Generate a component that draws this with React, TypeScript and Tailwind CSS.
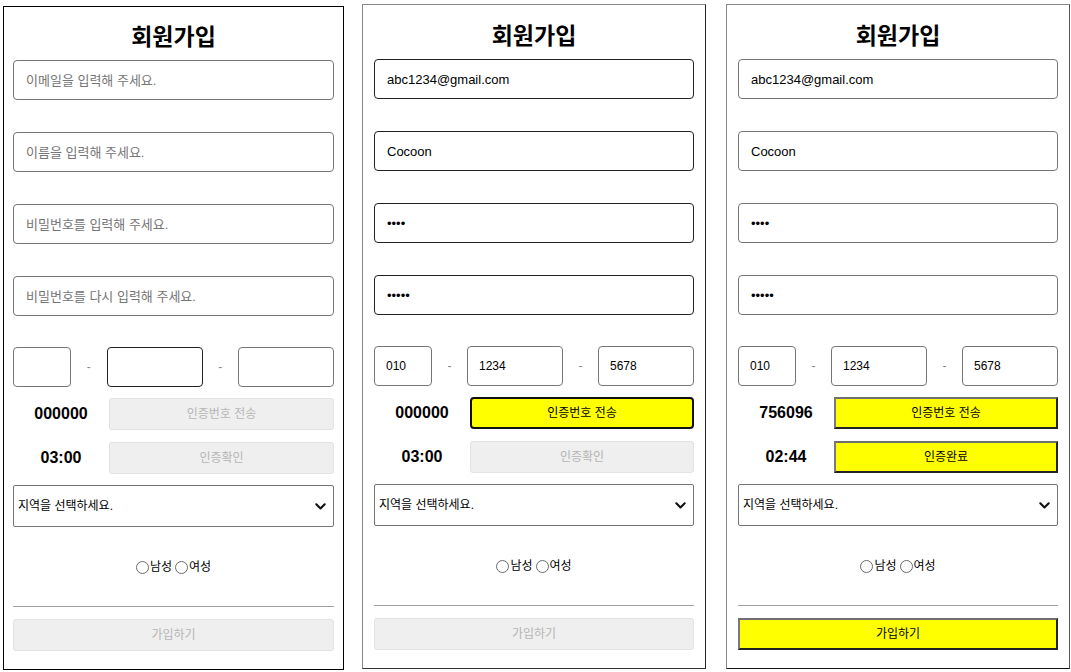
import React from "react";

type Variant = 1 | 2 | 3;

const FONT = { fontFamily: '"Liberation Sans", Arial, "Noto Sans CJK KR", sans-serif' };

function TextInput({
  placeholder,
  value,
  type = "text",
  dark,
}: {
  placeholder: string;
  value?: string;
  type?: string;
  dark?: boolean;
}) {
  return (
    <input
      readOnly
      type={type}
      placeholder={placeholder}
      value={value ?? ""}
      className={
        "block h-[40px] w-full rounded-[4px] border bg-white px-[12px] text-[13px] text-black outline-none placeholder:text-[#757575] " +
        (dark ? "border-[#222]" : "border-[#767676]")
      }
      style={FONT}
    />
  );
}

function PhoneBox({ value, dark, w }: { value: string; dark?: boolean; w: string }) {
  return (
    <input
      readOnly
      value={value}
      className={
        "block h-[40px] rounded-[4px] border bg-white px-[11px] text-[12px] text-black outline-none " +
        w +
        " " +
        (dark ? "border-[#222]" : "border-[#767676]")
      }
      style={FONT}
    />
  );
}

function Dash() {
  return <div className="flex flex-1 items-center justify-center text-[12px] text-[#888]">-</div>;
}

function DisabledBtn({ label }: { label: string }) {
  return (
    <div className="flex h-[32px] flex-1 items-center justify-center rounded-[3px] border border-[#e2e2e2] bg-[#efefef] text-[12px] text-[#b5b5b5]">
      {label}
    </div>
  );
}

function YellowRounded({ label }: { label: string }) {
  return (
    <div className="flex h-[32px] flex-1 items-center justify-center rounded-[4px] border-2 border-[#111] bg-[#ffff00] text-[12px] text-black">
      {label}
    </div>
  );
}

function YellowSquare({ label }: { label: string }) {
  return (
    <div className="flex h-[32px] flex-1 items-center justify-center border-2 border-t-[#6f6f6f] border-l-[#7a7a7a] border-r-[#222] border-b-[#222] bg-[#ffff00] text-[12px] text-black">
      {label}
    </div>
  );
}

function Radio({ label }: { label: string }) {
  return (
    <div className="flex items-center">
      <span className="mr-[1px] inline-block h-[13px] w-[13px] rounded-full border border-[#6b6b6b] bg-white" />
      <span className="text-[12px] text-black">{label}</span>
    </div>
  );
}

function Panel({ v }: { v: Variant }) {
  const filled = v !== 1;
  const panelCls =
    v === 1
      ? "mt-[6px] ml-[3px] w-[341px] border border-black px-[9px]"
      : v === 2
      ? "mt-[4px] ml-[18px] w-[344px] border border-t-[#888] border-l-[#888] border-r-[#222] border-b-[#333] px-[11px]"
      : "mt-[4px] ml-[20px] w-[344px] border border-t-[#888] border-l-[#888] border-r-[#555] border-b-[#111] px-[11px]";

  return (
    <div className={"flex flex-col bg-white pb-[18px] " + panelCls} style={FONT}>
      <div
        className={
          "flex items-center justify-center font-bold text-[23px] text-black " +
          (v === 1 ? "h-[53px] pt-[4px]" : "h-[54px] pt-[5px]")
        }
        style={{ fontFamily: '"Noto Sans CJK KR", sans-serif' }}
      >
        회원가입
      </div>

      <div className="h-[72px]">
        <TextInput placeholder="이메일을 입력해 주세요." value={filled ? "abc1234@gmail.com" : ""} dark={v === 2} />
      </div>
      <div className="h-[72px]">
        <TextInput placeholder="이름을 입력해 주세요." value={filled ? "Cocoon" : ""} dark={v === 2} />
      </div>
      <div className="h-[72px]">
        <TextInput
          placeholder="비밀번호를 입력해 주세요."
          type={filled ? "password" : "text"}
          value={filled ? "1234" : ""}
          dark={v === 2}
        />
      </div>
      <div className="h-[71px]">
        <TextInput
          placeholder="비밀번호를 다시 입력해 주세요."
          type={filled ? "password" : "text"}
          value={filled ? "12345" : ""}
          dark={v === 2}
        />
      </div>

      <div className="flex h-[40px] items-stretch">
        <PhoneBox w="w-[58px]" value={filled ? "010" : ""} />
        <Dash />
        <PhoneBox w="w-[96px]" value={filled ? "1234" : ""} dark={v === 1} />
        <Dash />
        <PhoneBox w="w-[96px]" value={filled ? "5678" : ""} />
      </div>

      <div className="mt-[11px] flex items-center">
        <div className="flex w-[96px] justify-center text-[16px] font-bold text-black">
          {v === 3 ? "756096" : "000000"}
        </div>
        {v === 1 ? (
          <DisabledBtn label="인증번호 전송" />
        ) : v === 2 ? (
          <YellowRounded label="인증번호 전송" />
        ) : (
          <YellowSquare label="인증번호 전송" />
        )}
      </div>

      <div className="mt-[12px] flex items-center">
        <div className="flex w-[96px] justify-center text-[16px] font-bold text-black">
          {v === 3 ? "02:44" : "03:00"}
        </div>
        {v === 3 ? <YellowSquare label="인증완료" /> : <DisabledBtn label="인증확인" />}
      </div>

      <div className="mt-[11px] flex h-[42px] items-center justify-between rounded-[2px] border border-[#767676] bg-white pl-[4px] pr-[7px]">
        <span className="text-[12px] text-black">지역을 선택하세요.</span>
        <svg width="11" height="7" viewBox="0 0 11 7" fill="none">
          <polyline points="1.3,1.3 5.5,5.5 9.7,1.3" stroke="#111" strokeWidth="2.1" strokeLinecap="round" strokeLinejoin="round" />
        </svg>
      </div>

      <div className="flex h-[79px] items-center justify-center gap-[3px] pt-[1px]">
        <Radio label="남성" />
        <Radio label="여성" />
      </div>

      <div className="h-[1px] bg-[#a0a0a0]" />

      <div className="mt-[12px] flex">
        {v === 3 ? <YellowSquare label="가입하기" /> : <DisabledBtn label="가입하기" />}
      </div>
    </div>
  );
}

export default function App() {
  return (
    <div className="flex h-[672px] w-[1071px] items-start bg-white">
      <Panel v={1} />
      <Panel v={2} />
      <Panel v={3} />
    </div>
  );
}
